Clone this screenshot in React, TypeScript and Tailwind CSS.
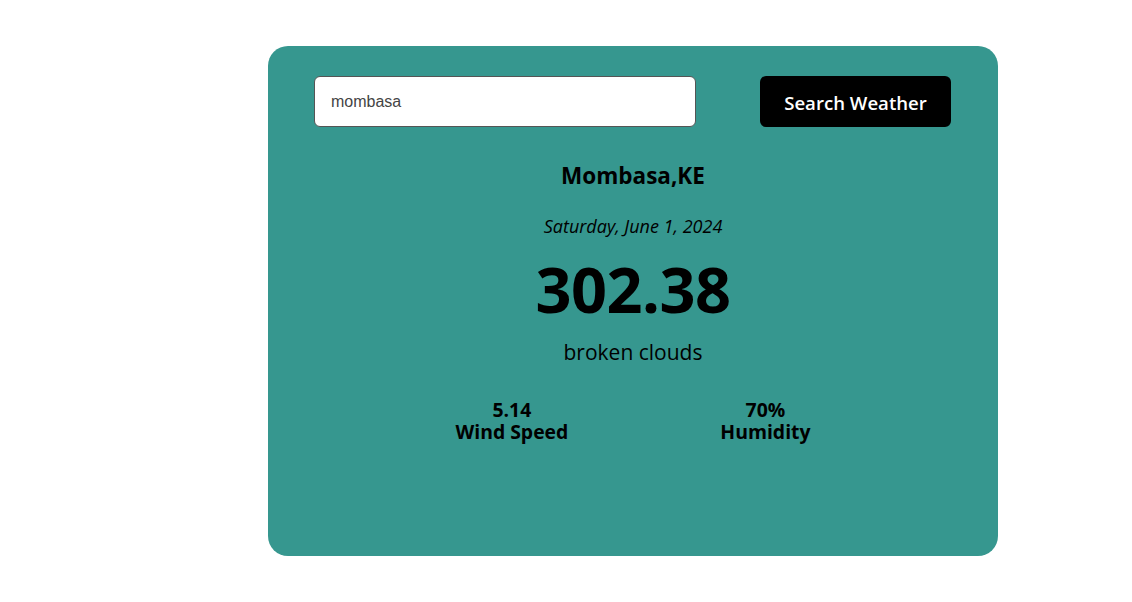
export default function App() {
  return (
    <div className="min-h-screen w-full bg-white pt-[46px] pl-[268px]">
      <div className="w-[730px] h-[510px] rounded-[20px] bg-[#36978f] font-['Open_Sans',sans-serif] text-black">
        <div className="flex items-center justify-between pt-[30px] pl-[46px] pr-[47px]">
          <input
            defaultValue="mombasa"
            className="w-[382px] h-[51px] rounded-[6px] border border-[#555] bg-white px-4 font-['Liberation_Sans',sans-serif] text-[16px] text-[#444] outline-none"
          />
          <button className="w-[191px] h-[51px] rounded-[6px] bg-black pt-[3px] text-[18.6px] font-semibold text-white">
            Search Weather
          </button>
        </div>
        <div className="flex flex-col items-center">
          <h2 className="mt-[34px] text-[22.5px] font-bold leading-[30px]">Mombasa,KE</h2>
          <p className="mt-[22px] text-[18px] italic leading-[26px]">Saturday, June 1, 2024</p>
          <h1 className="mt-[12px] text-[63px] font-bold leading-[76px] tracking-[-0.5px]">302.38</h1>
          <p className="mt-[10px] text-[21px] leading-[30px]">broken clouds</p>
          <div className="mt-[32px] flex justify-center gap-[152px] text-[19.4px] font-bold leading-[22px]">
            <p className="text-center">
              5.14
              <br />
              Wind Speed
            </p>
            <p className="text-center">
              70%
              <br />
              Humidity
            </p>
          </div>
        </div>
      </div>
    </div>
  );
}
